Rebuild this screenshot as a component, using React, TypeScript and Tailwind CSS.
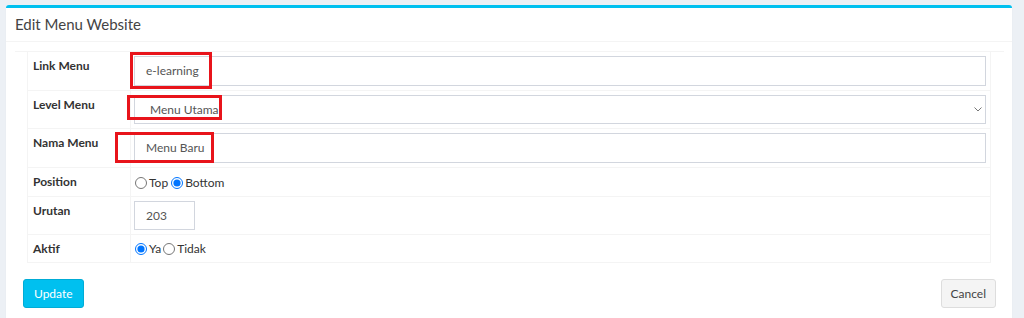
import React from 'react';

const Label: React.FC<{ children: React.ReactNode }> = ({ children }) => (
  <div className="border-r border-[#f4f4f4] pl-[5px] pt-[4px] text-[12px] leading-[20px] font-bold text-[#333]">
    {children}
  </div>
);

const Row: React.FC<{ label: string; children: React.ReactNode; pad?: string }> = ({ label, children, pad }) => (
  <div className="grid grid-cols-[103px_1fr] border-b border-[#f4f4f4]">
    <Label>{label}</Label>
    <div className={`pl-[3px] pr-[4px] ${pad ?? 'py-[4px]'}`}>{children}</div>
  </div>
);

const TextBox: React.FC<{ value: string; className?: string }> = ({ value, className }) => (
  <div className={`flex items-center border border-[#d2d6de] pl-[11px] text-[12px] text-[#555] ${className ?? ''}`}>
    {value}
  </div>
);

const Radio: React.FC<{ name: string; checked?: boolean; label: string }> = ({ name, checked, label }) => (
  <label className="inline-flex items-center text-[12px] leading-[20px] text-[#333]">
    <input type="radio" name={name} defaultChecked={checked} className="m-0 mr-[2px] h-[12px] w-[12px]" />
    {label}
  </label>
);

const App: React.FC = () => {
  return (
    <div className="relative min-h-[318px] overflow-hidden bg-[#ecf0f5] pl-[6px] pr-[12px] pt-[5px] font-['Lato',sans-serif]">
      <div className="rounded-t-[3px] border-t-[3px] border-[#00c0ef] bg-white pb-[20px] shadow-[0_1px_1px_rgba(0,0,0,0.1)]">
        <div className="flex h-[34px] items-center border-b border-[#f4f4f4] px-[9px]">
          <h3 className="text-[15px] text-[#444]">Edit Menu Website</h3>
        </div>

        <div className="ml-[9px] mr-[8px] mt-[9px] border-t border-[#f4f4f4] pl-[12px] pr-[13px]">
          <div className="border-x border-[#f4f4f4]">
            <Row label="Link Menu" pad="pt-[4px] pb-[4px]">
              <TextBox value="e-learning" className="h-[30px]" />
            </Row>
            <Row label="Level Menu">
              <div className="flex h-[29px] items-center justify-between border border-[#d2d6de] pl-[15px] pr-[3px] text-[12px] text-[#555]">
                <span>Menu Utama</span>
                <svg width="8" height="5" viewBox="0 0 8 5" fill="none">
                  <path d="M0.5 0.5 L4 4 L7.5 0.5" stroke="#777" strokeWidth="1" />
                </svg>
              </div>
            </Row>
            <Row label="Nama Menu">
              <TextBox value="Menu Baru" className="h-[30px]" />
            </Row>
            <Row label="Position" pad="pt-[5px] pb-[3px]">
              <div className="flex items-center gap-[3px] pl-[1px]">
                <Radio name="position" label="Top" />
                <Radio name="position" label="Bottom" checked />
              </div>
            </Row>
            <Row label="Urutan">
              <TextBox value="203" className="h-[29px] w-[61px]" />
            </Row>
            <Row label="Aktif" pad="pt-[4px] pb-[3px]">
              <div className="flex items-center gap-[2px] pl-[1px]">
                <Radio name="aktif" label="Ya" checked />
                <Radio name="aktif" label="Tidak" />
              </div>
            </Row>
          </div>
        </div>

        <div className="mt-[16px] flex items-center justify-between pl-[17px] pr-[16px]">
          <button className="h-[29px] rounded-[3px] border border-[#00acd6] bg-[#00c0ef] px-[10px] text-[12px] text-white">
            Update
          </button>
          <button className="h-[29px] rounded-[3px] border border-[#ddd] bg-[#f4f4f4] px-[9px] text-[12px] text-[#444]">
            Cancel
          </button>
        </div>
      </div>

      {/* red annotation boxes */}
      <div className="pointer-events-none absolute left-[130px] top-[52px] h-[37px] w-[82px] border-[3px] border-[#e8141b]" />
      <div className="pointer-events-none absolute left-[127px] top-[95px] h-[25px] w-[95px] border-[3px] border-[#e8141b]" />
      <div className="pointer-events-none absolute left-[115px] top-[132px] h-[31px] w-[99px] border-[3px] border-[#e8141b]" />
    </div>
  );
};

export default App;
